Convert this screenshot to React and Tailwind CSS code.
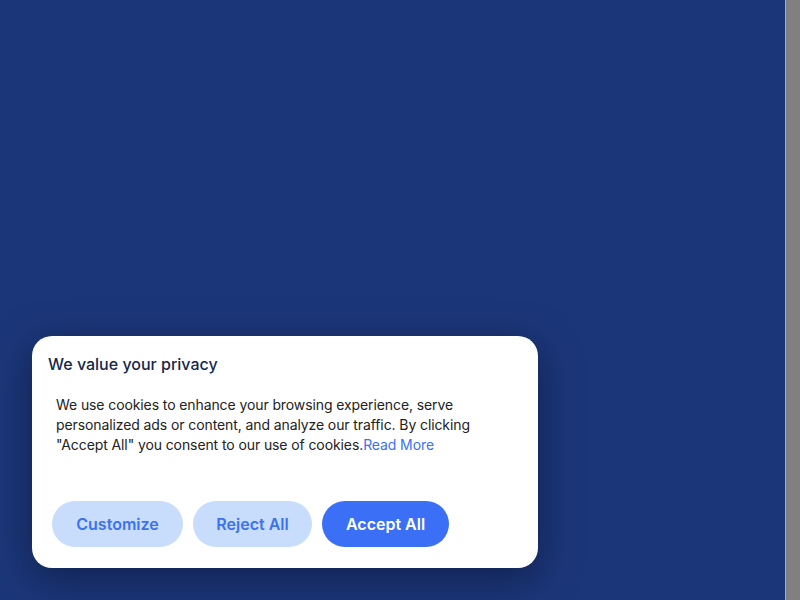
export default function App() {
  return (
    <div className="flex h-[600px] w-[800px] overflow-hidden font-['Inter',sans-serif]">
      <div className="flex flex-1 flex-col justify-end bg-[#1c3779] pb-8 pl-8">
        <div className="w-[506px] rounded-[20px] bg-white shadow-[0_10px_40px_rgba(5,15,45,0.55)]">
          <h2 className="px-4 pt-4 text-base leading-6 font-medium text-[#14284b]">We value your privacy</h2>
          <p className="mt-[19px] px-6 text-sm leading-5 tracking-[-0.1px] text-[#222]">
            We use cookies to enhance your browsing experience, serve personalized ads or content, and analyze our traffic. By clicking "Accept All" you consent to our use of cookies.
            <a href="#" className="text-[#3b72f0]">Read More</a>
          </p>
          <div className="mt-[46px] flex gap-[10px] pr-5 pb-[21px] pl-5">
            <button className="h-[46px] w-[131px] rounded-full bg-[#c8dcfb] text-base font-semibold text-[#3b72f0]">Customize</button>
            <button className="h-[46px] w-[119px] rounded-full bg-[#c8dcfb] text-base font-semibold text-[#3b72f0]">Reject All</button>
            <button className="h-[46px] w-[127px] rounded-full bg-[#3b6ff5] text-base font-semibold text-white">Accept All</button>
          </div>
        </div>
      </div>
      <div className="w-[15px] border-l border-[#a9a9b8] bg-[#808080]" />
    </div>
  )
}
